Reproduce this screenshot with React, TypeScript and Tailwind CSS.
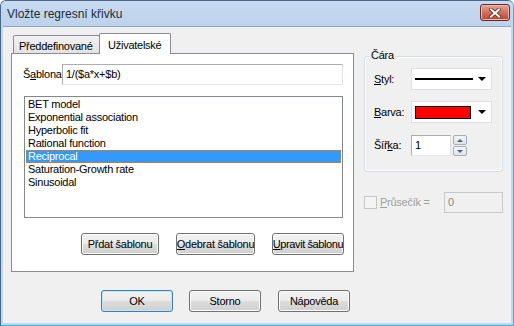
import React from 'react'

const items = [
  'BET model',
  'Exponential association',
  'Hyperbolic fit',
  'Rational function',
  'Reciprocal',
  'Saturation-Growth rate',
  'Sinusoidal',
]

function Btn({ children, w, def }: { children: React.ReactNode; w: string; def?: boolean }) {
  return (
    <div
      className={`${w} h-[22px] rounded-[3px] border overflow-hidden flex items-center justify-center whitespace-nowrap bg-[linear-gradient(#f2f2f2_0%,#ebebeb_50%,#dddddd_51%,#cfcfcf_100%)] ${
        def ? 'border-[#3c7fb1] shadow-[inset_0_0_0_1px_#bfe7fb]' : 'border-[#707070] shadow-[inset_0_0_0_1px_#fbfbfb]'
      }`}
    >
      {children}
    </div>
  )
}

function Arrow() {
  return <div className="w-0 h-0 border-l-[4px] border-r-[4px] border-t-[4px] border-l-transparent border-r-transparent border-t-black" />
}

export default function App() {
  return (
    <div className="w-[514px] h-[326px] flex flex-col bg-[#c0d6ee] border border-[#4a6686] border-b-[#2fb2dc] border-r-[#3fb8e0] rounded-t-[6px] overflow-hidden font-['Liberation_Sans',sans-serif] text-[11px] tracking-[-0.25px] text-black">
      {/* Title bar */}
      <div className="h-[25px] flex items-center pl-[6px] pr-[3px] bg-gradient-to-b from-[#c6daf0] to-[#bdd3eb]">
        <span className="text-[12px] tracking-normal text-[#1e2a38]">Vložte regresní křivku</span>
        <div className="ml-auto w-[30px] h-[17px] mb-[2px] rounded-[3px] border border-[#6b2a22] bg-gradient-to-b from-[#e6a597] via-[#d2705f] to-[#c0412a] flex items-center justify-center shadow-[inset_0_0_0_1px_#eab7ab]">
          <svg width="12" height="10" viewBox="0 0 12 10">
            <path d="M2 1.5 L10 8.5 M10 1.5 L2 8.5" stroke="#5a2a22" strokeWidth="3.6" strokeLinecap="square" />
            <path d="M2 1.5 L10 8.5 M10 1.5 L2 8.5" stroke="#ffffff" strokeWidth="2" strokeLinecap="square" />
          </svg>
        </div>
      </div>

      {/* Client area */}
      <div className="flex-1 mx-[2px] mb-[2px] bg-[#f0f0f0] border-t border-[#8ea6c2] pt-[6px] pl-[8px]">
        <div className="flex">
          {/* Tab control */}
          <div className="w-[343px] flex flex-col">
            <div className="h-[20px] flex items-end pl-[2px]">
              <div className="w-[87px] h-[18px] border border-b-0 border-[#898c95] rounded-t-[2px] bg-gradient-to-b from-[#f3f3f3] to-[#e2e2e2] pl-[5px] pt-[2px]">
                Předdefinované
              </div>
              <div className="w-[72px] h-[21px] -ml-px -mb-px relative border border-b-0 border-[#898c95] rounded-t-[2px] bg-white pl-[8px] pt-[3px]">
                Uživatelské
              </div>
            </div>
            <div className="h-[219px] border border-[#898c95] bg-white pl-[11px] pt-[10px]">
              <div className="flex items-center h-[21px]">
                <span className="w-[39px]">
                  Š<span className="underline">a</span>blona
                </span>
                <div className="w-[281px] h-[21px] border border-[#abadb3] border-b-[#e3e9ef] border-r-[#dbdfe6] pl-[3px] flex items-center">
                  1/($a*x+$b)
                </div>
              </div>
              <div className="ml-[1px] mt-[11px] w-[319px] h-[122px] border border-[#828790] bg-white pt-[1px] pl-[1px] pr-[1px]">
                {items.map((it) => (
                  <div
                    key={it}
                    className={`h-[13px] leading-[13px] pl-[2px] ${
                      it === 'Reciprocal' ? 'bg-[#3399ff] text-white outline outline-1 outline-dotted outline-[#c08040] -outline-offset-1' : ''
                    }`}
                  >
                    {it}
                  </div>
                ))}
              </div>
              <div className="flex mt-[15px] ml-[58px]">
                <Btn w="w-[78px]">Přdat šablonu</Btn>
                <div className="ml-[17px]">
                  <Btn w="w-[79px]">
                    <span>
                      <span className="underline">O</span>debrat šablonu
                    </span>
                  </Btn>
                </div>
                <div className="ml-[17px]">
                  <Btn w="w-[72px]">
                    <span className="tracking-[-0.4px]">
                      <span className="underline">U</span>pravit šablonu
                    </span>
                  </Btn>
                </div>
              </div>
            </div>
          </div>

          {/* Right column */}
          <div className="ml-[10px] w-[139px] flex flex-col">
            <div className="relative mt-[23px] h-[116px] border border-[#d5dfe5] rounded-[3px] shadow-[inset_0_0_0_1px_#fdfdfd] pl-[9px] pt-[11px]">
              <span className="absolute -top-[8px] left-[5px] bg-[#f0f0f0] px-[1px] leading-[13px]">Čára</span>
              <div className="flex items-center h-[22px]">
                <span className="w-[37px]">
                  <span className="underline">S</span>tyl:
                </span>
                <div className="w-[81px] h-[22px] border border-[#dbdfe6] bg-white flex items-center pl-[3px] pr-[5px]">
                  <div className="w-[58px] h-[2px] bg-black" />
                  <div className="ml-auto"><Arrow /></div>
                </div>
              </div>
              <div className="flex items-center h-[22px] mt-[11px]">
                <span className="w-[37px]">
                  <span className="underline">B</span>arva:
                </span>
                <div className="w-[81px] h-[22px] border border-[#dbdfe6] bg-white flex items-center pl-[3px] pr-[5px]">
                  <div className="w-[56px] h-[13px] bg-[#ff0000] border border-black" />
                  <div className="ml-auto"><Arrow /></div>
                </div>
              </div>
              <div className="flex items-center h-[21px] mt-[12px]">
                <span className="w-[37px]">
                  Šíř<span className="underline">k</span>a:
                </span>
                <div className="w-[40px] h-[21px] border border-[#abadb3] border-b-[#e3e9ef] border-r-[#dbdfe6] bg-white flex items-center pl-[3px]">
                  1
                </div>
                <div className="ml-[2px] flex flex-col gap-px">
                  <div className="w-[14px] h-[10px] border border-[#a7adb7] rounded-[2px] bg-gradient-to-b from-[#f4f4f4] to-[#dfe3e8] flex items-center justify-center">
                    <div className="w-0 h-0 border-l-[3px] border-r-[3px] border-b-[3px] border-l-transparent border-r-transparent border-b-[#4d6185]" />
                  </div>
                  <div className="w-[14px] h-[10px] border border-[#a7adb7] rounded-[2px] bg-gradient-to-b from-[#f4f4f4] to-[#dfe3e8] flex items-center justify-center">
                    <div className="w-0 h-0 border-l-[3px] border-r-[3px] border-t-[3px] border-l-transparent border-r-transparent border-t-[#4d6185]" />
                  </div>
                </div>
              </div>
            </div>
            <div className="flex items-center h-[21px] mt-[20px] text-[#a0a0a0]">
              <div className="w-[13px] h-[13px] border border-[#c5c5c5] bg-[#f4f4f4]" />
              <span className="ml-[3px]">
                <span className="underline">P</span>růsečík =
              </span>
              <div className="ml-auto w-[59px] h-[21px] border border-[#c9c9c9] bg-[#f0f0f0] flex items-center pl-[3px] text-[#8a8a8a]">
                0
              </div>
            </div>
          </div>
        </div>

        {/* Dialog buttons */}
        <div className="flex mt-[18px] ml-[90px]">
          <Btn w="w-[72px]" def>OK</Btn>
          <div className="ml-[16px]">
            <Btn w="w-[72px]">Storno</Btn>
          </div>
          <div className="ml-[17px]">
            <Btn w="w-[72px]">Nápověda</Btn>
          </div>
        </div>
      </div>
    </div>
  )
}
